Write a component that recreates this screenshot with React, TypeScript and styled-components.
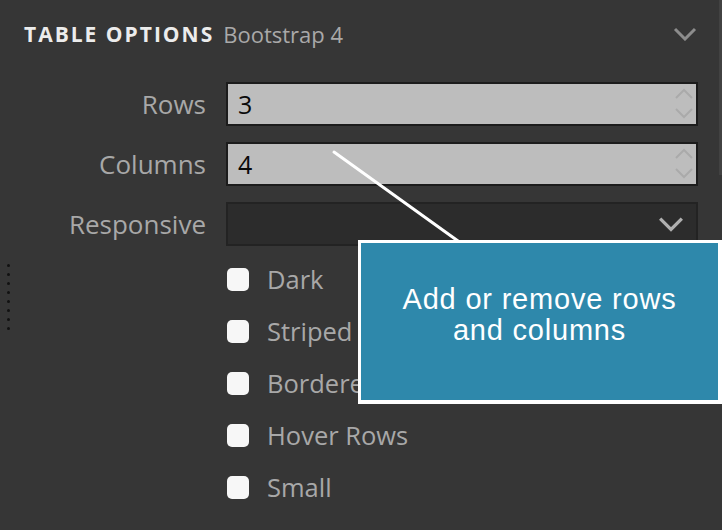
import React from "react";
import styled, { createGlobalStyle } from "styled-components";

const Global = createGlobalStyle`
  html, body { margin: 0; padding: 0; background: #363636; }
  body { font-family: "Open Sans", "Liberation Sans", sans-serif; }
  * { box-sizing: border-box; }
`;

const Panel = styled.div`
  position: relative;
  width: 722px;
  height: 530px;
  overflow: hidden;
  background: #363636;
`;

const Header = styled.div`
  display: flex;
  align-items: center;
  height: 68px;
  padding: 0 25px 0 24px;
`;

const Title = styled.span`
  font-size: 21px;
  font-weight: 700;
  letter-spacing: 2px;
  color: #ececec;
  line-height: 26px;
`;

const Subtitle = styled.span`
  margin-left: 9px;
  font-size: 22px;
  color: #a9a9a9;
  line-height: 26px;
`;

const HeaderChevron = styled.svg`
  margin-left: auto;
  width: 24px;
  height: 14px;
`;

const Form = styled.div`
  display: grid;
  grid-template-columns: 206px 1fr;
  column-gap: 20px;
  row-gap: 16px;
  padding: 14px 24px 0 0;
`;

const Label = styled.div`
  text-align: right;
  align-self: center;
  font-size: 26px;
  color: #a8a8a8;
  line-height: 34px;
`;

const Field = styled.div<{ $dark?: boolean }>`
  position: relative;
  display: flex;
  align-items: center;
  height: 44px;
  padding: 0 0 0 10px;
  border: 2px solid ${(p) => (p.$dark ? "#232323" : "#1c1c1c")};
  background: ${(p) => (p.$dark ? "#2c2c2c" : "#bdbdbd")};
  font-size: 25px;
  color: #0a0a0a;
`;

const Value = styled.span`
  flex: 1;
`;

const Spinner = styled.svg`
  width: 18px;
  height: 32px;
  margin-right: 3px;
`;

const SelectChevron = styled.svg`
  margin-left: auto;
  width: 26px;
  height: 16px;
  margin-right: 12px;
`;

const Checks = styled.div`
  display: flex;
  flex-direction: column;
  padding: 7px 0 0 227px;
`;

const CheckRow = styled.label`
  display: flex;
  align-items: center;
  height: 52px;
  gap: 18px;
  font-size: 25.5px;
  color: #a8a8a8;
`;

const Box = styled.span`
  display: inline-block;
  width: 22px;
  height: 23px;
  border-radius: 5px;
  background: #f7f7f7;
`;

const Handle = styled.div`
  position: absolute;
  left: 7px;
  top: 264px;
  display: flex;
  flex-direction: column;
  gap: 6px;
`;

const Dot = styled.span`
  width: 3px;
  height: 3px;
  border-radius: 50%;
  background: #111;
`;

const ScrollThumb = styled.div`
  position: absolute;
  right: 0;
  top: 0;
  width: 3px;
  height: 175px;
  background: #424242;
`;

const Pointer = styled.svg`
  position: absolute;
  left: 0;
  top: 0;
  width: 722px;
  height: 530px;
  pointer-events: none;
`;

const Tooltip = styled.div`
  position: absolute;
  left: 358px;
  top: 240px;
  width: 364px;
  height: 164px;
  border-style: solid;
  border-color: #ffffff;
  border-width: 3px 4px 4px 3px;
  background: #2e88ab;
  padding-top: 41px;
  text-align: center;
  font-family: "Liberation Sans", Arial, sans-serif;
  font-size: 29px;
  letter-spacing: 0.8px;
  line-height: 31px;
  color: #ffffff;
`;

const options = ["Dark", "Striped", "Bordered", "Hover Rows", "Small"];

function Chevron({ color }: { color: string }) {
  return <polyline points="2,2 12,12 22,2" fill="none" stroke={color} strokeWidth={3} />;
}

function NumberField({ value }: { value: string }) {
  return (
    <Field>
      <Value>{value}</Value>
      <Spinner viewBox="0 0 18 32">
        <polyline points="1,10 9,2 17,10" fill="none" stroke="#aaaaaa" strokeWidth={2} />
        <polyline points="1,21 9,29 17,21" fill="none" stroke="#aaaaaa" strokeWidth={2} />
      </Spinner>
    </Field>
  );
}

export default function App() {
  return (
    <Panel>
      <Global />
      <Header>
        <Title>TABLE OPTIONS</Title>
        <Subtitle>Bootstrap 4</Subtitle>
        <HeaderChevron viewBox="0 0 24 14">
          <Chevron color="#8c8c8c" />
        </HeaderChevron>
      </Header>
      <Form>
        <Label>Rows</Label>
        <NumberField value="3" />
        <Label>Columns</Label>
        <NumberField value="4" />
        <Label>Responsive</Label>
        <Field $dark>
          <SelectChevron viewBox="0 0 24 14">
            <Chevron color="#b0b0b0" />
          </SelectChevron>
        </Field>
      </Form>
      <Checks>
        {options.map((o) => (
          <CheckRow key={o}>
            <Box />
            {o}
          </CheckRow>
        ))}
      </Checks>
      <Handle>
        {Array.from({ length: 8 }).map((_, i) => (
          <Dot key={i} />
        ))}
      </Handle>
      <ScrollThumb />
      <Pointer viewBox="0 0 722 530">
        <line x1="334" y1="152" x2="458" y2="241" stroke="#ffffff" strokeWidth={3} strokeLinecap="round" />
      </Pointer>
      <Tooltip>
        Add or remove rows
        <br />
        and columns
      </Tooltip>
    </Panel>
  );
}
